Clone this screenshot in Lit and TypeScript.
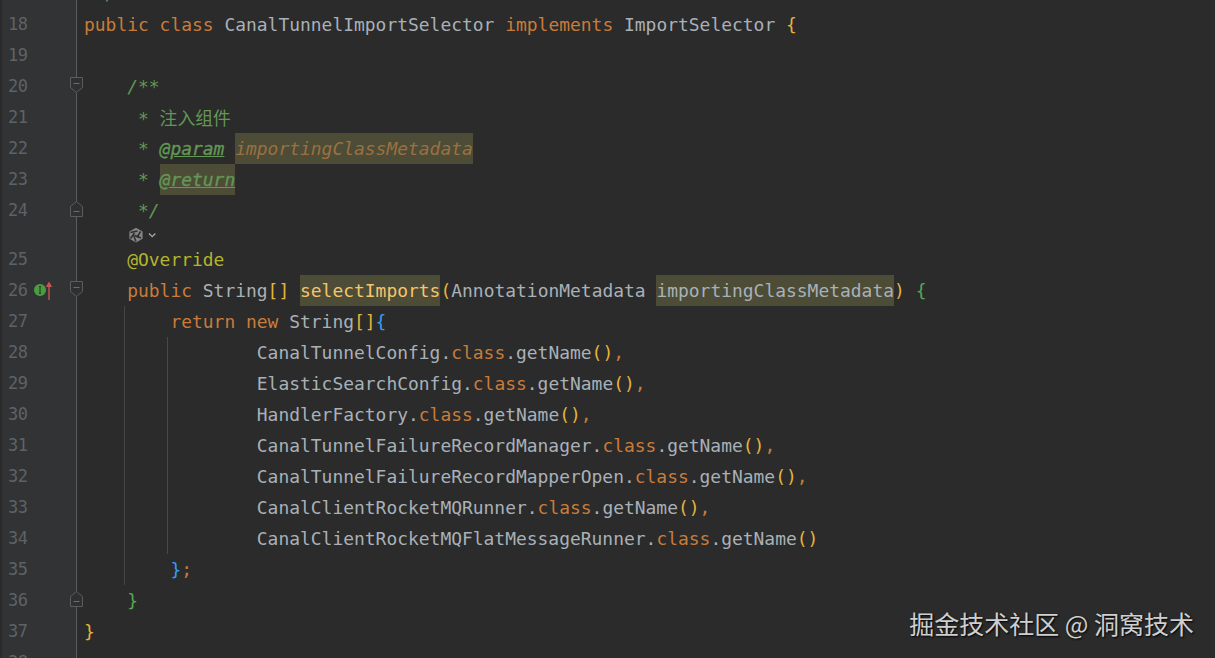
import { LitElement, html, css, svg } from "lit";
import { customElement } from "lit/decorators.js";

type Tok = [string, string];
interface Line { n: number; toks: Tok[]; fold?: "start" | "end"; guides?: string[]; mark?: boolean; }

const K = "k", T = "t", C = "c";
const getName = (cls: string, tail = ","): Tok[] => [
  [T, " ".repeat(16) + cls + "."], [K, "class"], [T, ".getName"], ["by", "()"], [K, tail],
];

const before: Line[] = [
  { n: 17, toks: [[C, " */"]], fold: "end" },
  { n: 18, toks: [[K, "public class "], [T, "CanalTunnelImportSelector "], [K, "implements "], [T, "ImportSelector "], ["by", "{"]] },
  { n: 19, toks: [] },
  { n: 20, toks: [[C, "    /**"]], fold: "start" },
  { n: 21, toks: [[C, "     * "], ["cz", "注入组件"]] },
  { n: 22, toks: [[C, "     * "], ["tag", "@param"], [C, " "], ["pn", "importingClassMetadata"]] },
  { n: 23, toks: [[C, "     * "], ["tag hl", "@return"]] },
  { n: 24, toks: [[C, "     */"]], fold: "end" },
];
const after: Line[] = [
  { n: 25, toks: [["a", "    @Override"]] },
  { n: 26, mark: true, fold: "start", toks: [
    [K, "    public "], [T, "String"], ["by", "[]"], [T, " "], ["m hl", "selectImports"], ["by", "("],
    [T, "AnnotationMetadata "], ["t hl", "importingClassMetadata"], ["by", ")"], [T, " "], ["bg", "{"],
  ] },
  { n: 27, guides: ["g1"], toks: [[K, "        return new "], [T, "String"], ["by", "[]"], ["bb", "{"]] },
  { n: 28, guides: ["g1", "g2"], toks: getName("CanalTunnelConfig") },
  { n: 29, guides: ["g1", "g2"], toks: getName("ElasticSearchConfig") },
  { n: 30, guides: ["g1", "g2"], toks: getName("HandlerFactory") },
  { n: 31, guides: ["g1", "g2"], toks: getName("CanalTunnelFailureRecordManager") },
  { n: 32, guides: ["g1", "g2"], toks: getName("CanalTunnelFailureRecordMapperOpen") },
  { n: 33, guides: ["g1", "g2"], toks: getName("CanalClientRocketMQRunner") },
  { n: 34, guides: ["g1", "g2"], toks: getName("CanalClientRocketMQFlatMessageRunner", "") },
  { n: 35, guides: ["g1"], toks: [[T, "        "], ["bb", "}"], [K, ";"]] },
  { n: 36, fold: "end", toks: [[T, "    "], ["bg", "}"]] },
  { n: 37, toks: [["by", "}"]] },
  { n: 38, toks: [] },
];

@customElement("app-root")
export class AppRoot extends LitElement {
  static styles = css`
    :host {
      display: block;
      width: 1215px;
      height: 658px;
      overflow: hidden;
      position: relative;
      background: #2b2b2b;
    }
    .rows { display: flex; flex-direction: column; margin-top: -22px; }
    .row { display: flex; height: 31px; position: relative; flex: none; }
    .row.inlay { height: 18px; }
    .gutter {
      flex: none;
      box-sizing: border-box;
      width: 77px;
      padding-left: 6px;
      background: #313335;
      border-left: 2px solid #2a2a2a;
      border-right: 1px solid #5a5c5e;
      color: #5f6265;
      font: 17px/31px "DejaVu Sans Mono", monospace;
      letter-spacing: -0.6px;
    }
    .code {
      flex: 1;
      padding-left: 7px;
      white-space: pre;
      font: 17.94px/31px "DejaVu Sans Mono", "Noto Sans CJK SC", monospace;
      color: #a9b1b8;
    }
    .k { color: #c97c3a; }
    .t { color: #a9b1b8; }
    .c { color: #629755; font-style: italic; }
    .cz { color: #629755; font-family: "Noto Sans CJK SC", sans-serif; font-size: 17.8px; }
    .tag { color: #629755; font-style: italic; -webkit-text-stroke: 0.35px #629755; text-decoration: underline; }
    .pn { color: #9c7040; font-style: italic; background: #4c4c37; display: inline-block; height: 31px; }
    .a { color: #b4b52b; }
    .m { color: #f5c46e; }
    .by { color: #e5b33a; }
    .bg { color: #54a857; }
    .bb { color: #359ff4; }
    .hl { background: #4c4c37; display: inline-block; height: 31px; }
    .guide { position: absolute; top: 0; bottom: 0; width: 1px; }
    .g1 { left: 124px; background: #454545; }
    .g2 { left: 167px; background: #2f4f68; }
    .fold { position: absolute; left: 70px; top: 6px; width: 13px; height: 16px; overflow: visible; }
    .marks { position: absolute; left: 33px; top: 5px; width: 22px; height: 21px; }
    .inlay-ic { position: absolute; left: 128px; top: 1px; width: 30px; height: 17px; }
    .mark {
      position: absolute;
      right: 21px;
      bottom: 18px;
      color: #cfcfcf;
      font: 25px/34px "Noto Sans CJK SC", sans-serif;
      text-shadow: 1px 1px 2px #000;
      white-space: pre;
    }
  `;

  private foldIcon(kind: "start" | "end") {
    const p = kind === "start"
      ? "M.5 .5H12.5V10.5L6.5 15.5L.5 10.5Z"
      : "M.5 15.5H12.5V5.5L6.5 .5L.5 5.5Z";
    const dash = kind === "start" ? "M3.5 6.5H9.5" : "M3.5 10.5H9.5";
    return html`<svg class="fold" viewBox="0 0 13 16">
      <path d=${p} fill="#2f3032" stroke="#5a5c5e"></path>
      <path d=${dash} stroke="#6a6c6e" fill="none"></path>
    </svg>`;
  }

  private changeMarks() {
    return html`<svg class="marks" viewBox="0 0 22 21">
      <circle cx="7" cy="10" r="6" fill="#4c9b45"></circle>
      <path d="M7 6.5V13.5M5.8 6.5H8.2M5.8 13.5H8.2" stroke="#27451f" stroke-width="1.2" fill="none"></path>
      <path d="M16 20V3" stroke="#c75450" stroke-width="1.4" fill="none"></path>
      <path d="M12.8 7L16 1.5L19.2 7Z" fill="#c75450"></path>
    </svg>`;
  }

  private inlayIcon() {
    return html`<svg class="inlay-ic" viewBox="0 0 30 17">
      ${svg`
        <path d="M8 .8L14.6 4.4V11.8L8 15.6L1.4 11.8V4.4Z" fill="#858585"></path>
        <path d="M2.5 5.5L9.5 4M12.5 4.5L9 10.5M13 11L7 8.5M8 14.5L5.5 8M2.5 11.5L6.5 6" fill="none" stroke="#2f2f2f" stroke-width="1.5"></path>
        <path d="M21 6.5L24.2 9.7L27.4 6.5" fill="none" stroke="#a8a8a8" stroke-width="1.3"></path>
      `}
    </svg>`;
  }

  private row(l: Line) {
    return html`<div class="row">
      <div class="gutter"><span>${l.n}</span></div>
      <div class="code">${l.toks.map(([c, t]) => html`<span class=${c}>${t}</span>`)}</div>
      ${(l.guides ?? []).map((g) => html`<i class="guide ${g}"></i>`)}
      ${l.fold ? this.foldIcon(l.fold) : ""}
      ${l.mark ? this.changeMarks() : ""}
    </div>`;
  }

  render() {
    return html`
      <div class="rows">
        ${before.map((l) => this.row(l))}
        <div class="row inlay">
          <div class="gutter"></div>
          <div class="code"></div>
          ${this.inlayIcon()}
        </div>
        ${after.map((l) => this.row(l))}
      </div>
      <div class="mark">掘金技术社区 @ 洞窝技术</div>
    `;
  }
}
